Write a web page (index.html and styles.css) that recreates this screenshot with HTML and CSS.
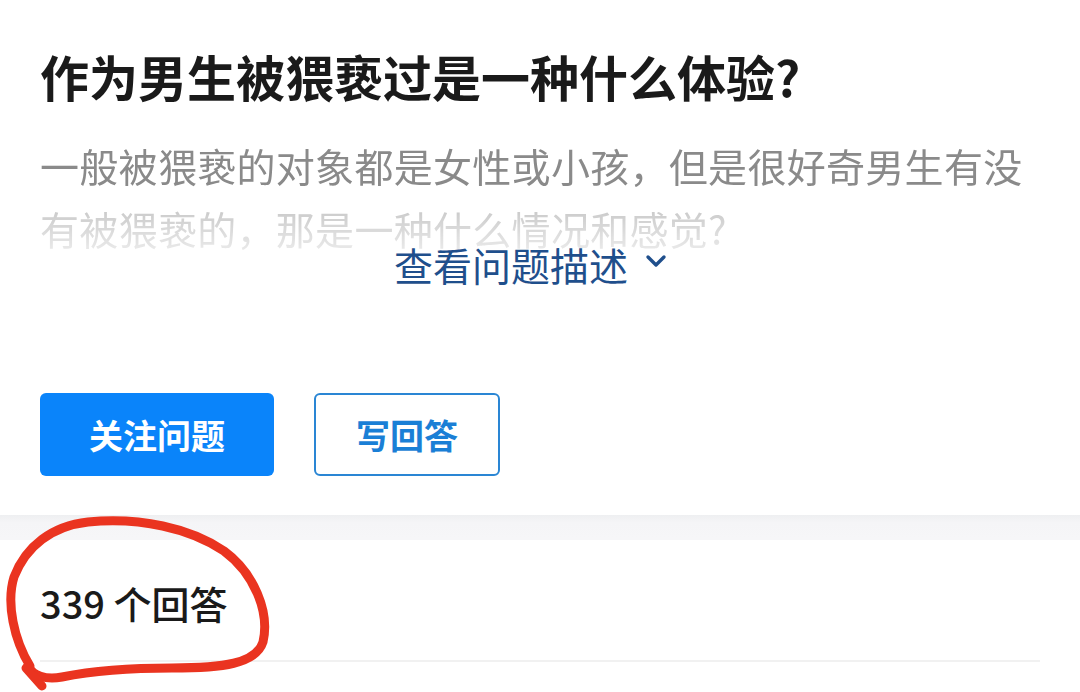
FILE: index.html
```html
<!DOCTYPE html>
<html lang="zh-CN">
<head>
<meta charset="utf-8">
<title>作为男生被猥亵过是一种什么体验?</title>
<link rel="stylesheet" href="styles.css">
</head>
<body>
<main class="question">
  <h1 class="title">作为男生被猥亵过是一种什么体验?</h1>
  <div class="desc-wrap">
    <p class="desc">一般被猥亵的对象都是女性或小孩，但是很好奇男生有没有被猥亵的，那是一种什么情况和感觉?</p>
    <div class="expand">
      <span>查看问题描述</span>
      <svg class="chev" width="24" height="18" viewBox="0 0 24 18"><polyline points="4,5 12,13 20,5" fill="none" stroke="#1f4f8c" stroke-width="3.4" stroke-linecap="round" stroke-linejoin="round"/></svg>
    </div>
  </div>
  <div class="actions">
    <button class="btn btn-primary">关注问题</button>
    <button class="btn btn-outline">写回答</button>
  </div>
</main>
<div class="band"></div>
<section class="answers">
  <h2 class="count">339 个回答</h2>
  <div class="divider"></div>
</section>
<svg class="annotation" width="300" height="200" viewBox="0 500 300 200">
  <path d="M 30 666 C 14 640, 6 603, 14 577 C 26 546, 52 526, 88 522 C 140 517, 190 528, 224 551 C 254 573, 270 612, 263 642 C 256 664, 222 668, 172 668 C 122 668, 92 671, 62 677 C 46 680, 32 676, 28 665" fill="none" stroke="#ea3420" stroke-width="9" stroke-linecap="round" stroke-linejoin="round"/>
  <path d="M 26 668 L 42 686" fill="none" stroke="#ea3420" stroke-width="9" stroke-linecap="round"/>
</svg>
</body>
</html>
```

FILE: styles.css
```css
* { box-sizing: border-box; }
html, body { margin: 0; padding: 0; background: #ffffff; }
body {
  width: 1080px;
  height: 692px;
  overflow: hidden;
  position: relative;
  font-family: "Noto Sans CJK SC", "Noto Sans", sans-serif;
  color: #1a1a1a;
}
.question { padding: 42px 40px 0; }
.title {
  margin: 0;
  font-size: 49px;
  line-height: 67px;
  font-weight: 700;
  color: #1a1a1a;
  letter-spacing: 0;
}
.desc-wrap {
  position: relative;
  margin-top: 25px;
  height: 126px;
}
.desc {
  margin: 0;
  font-size: 39px;
  line-height: 63px;
  letter-spacing: 0.3px;
  color: #8a8a8a;
  height: 126px;
  overflow: hidden;
  -webkit-mask-image: linear-gradient(to bottom, #000 0%, #000 48%, rgba(0,0,0,0.45) 60%, rgba(0,0,0,0.12) 100%);
  mask-image: linear-gradient(to bottom, #000 0%, #000 48%, rgba(0,0,0,0.45) 60%, rgba(0,0,0,0.12) 100%);
}
.expand {
  position: absolute;
  left: 0;
  right: 0;
  top: 110px;
  height: 40px;
  display: flex;
  justify-content: center;
  align-items: center;
  gap: 16px;
  font-size: 39px;
  line-height: 40px;
  color: #1f4f8c;
  padding-right: 18px;
}
.chev { display: block; margin-top: -6px; }
.actions {
  display: flex;
  gap: 40px;
  margin-top: 133px;
}
.btn {
  height: 83px;
  border-radius: 6px;
  font-family: "Noto Sans CJK SC", sans-serif;
  font-size: 34px;
  font-weight: 700;
  padding: 0;
  cursor: pointer;
}
.btn-primary {
  width: 234px;
  background: #0a84fa;
  color: #ffffff;
  border: none;
}
.btn-outline {
  width: 186px;
  background: #ffffff;
  color: #1a7fd6;
  border: 2px solid #2a86d4;
}
.band {
  margin-top: 39px;
  height: 25px;
  background: linear-gradient(to bottom, #eeeff1 0%, #f5f5f7 30%, #f6f6f8 100%);
}
.answers { padding: 38px 40px 0; }
.count {
  margin: 0;
  font-size: 38px;
  line-height: 50px;
  font-weight: 500;
  color: #1a1a1a;
}
.divider {
  margin-top: 32px;
  height: 2px;
  background: #f1f1f1;
}
.annotation {
  position: absolute;
  left: 0;
  top: 500px;
}
```
